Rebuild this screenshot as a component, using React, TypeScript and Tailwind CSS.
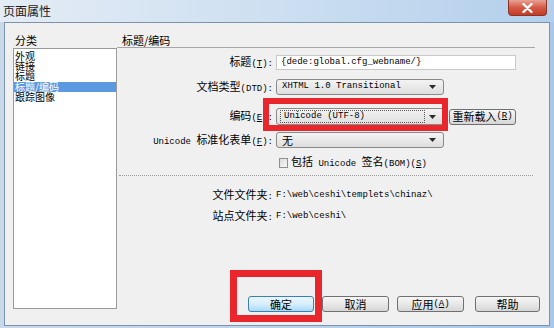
import React from 'react'

const mono = "font-['Liberation_Mono',monospace] text-[9px]"
const btn =
  "h-[16px] rounded-[3px] border border-[#707070] bg-gradient-to-b from-[#f6f6f6] via-[#e8e8e8] to-[#d6d6d6] flex items-center justify-center text-[11px] leading-none text-black"

const Arrow = () => (
  <svg width="7" height="4" viewBox="0 0 7 4" className="absolute right-[7px] top-1/2 -translate-y-1/2">
    <path d="M0 0 H7 L3.5 4 Z" fill="#2b2b2b" />
  </svg>
)

const Select = ({ children, w, h }: { children: React.ReactNode; w: string; h: string }) => (
  <div
    className={`${w} ${h} relative rounded-[3px] border border-[#8a8a8a] bg-gradient-to-b from-[#f4f4f4] to-[#dedede] flex items-center pl-[5px]`}
  >
    {children}
    <Arrow />
  </div>
)

const Row = ({ label, children, className }: { label: React.ReactNode; children: React.ReactNode; className: string }) => (
  <div className={`flex items-center ${className}`}>
    <div className="w-[156px] text-right text-[11px] leading-[12px] whitespace-nowrap">{label}</div>
    <div className="ml-[3px] flex items-center">{children}</div>
  </div>
)

export default function App() {
  return (
    <div className="relative w-[554px] h-[328px] overflow-hidden bg-gradient-to-r from-[#c9d9ea] via-[#bcd3ec] to-[#a9c8e8] font-['Noto_Sans_CJK_SC',sans-serif] text-black">
      {/* title bar */}
      <div className="h-[22px] flex items-center pl-[3px] bg-gradient-to-r from-[#e4ecf5] via-[#cddff1] to-[#b3cfec]">
        <span className="text-[12px] leading-none text-[#1a1a1a]">页面属性</span>
      </div>
      <div className="absolute top-0 right-[7px] w-[39px] h-[16px] rounded-b-[4px] border border-t-0 border-[#8d3324] bg-gradient-to-b from-[#e9a195] via-[#d45a45] to-[#c33c26] flex items-center justify-center">
        <svg width="11" height="10" viewBox="0 0 11 10">
          <path d="M1.5 1 L9.5 9 M9.5 1 L1.5 9" stroke="#fff" strokeWidth="2.4" strokeLinecap="round" />
        </svg>
      </div>

      {/* body */}
      <div className="mx-[4px] h-[304px] border border-[#7c93ad] bg-[#f0f0f0] flex">
        {/* left column */}
        <div className="w-[112px] pl-[8px] flex flex-col">
          <div className="pt-[11px] pl-[2px] text-[11px] leading-[12px]">分类</div>
          <div className="mt-[2px] w-[104px] h-[261px] border border-[#9a9a9a] bg-white pt-[2px] text-[10px] leading-[10px]">
            <div className="pl-[1px]">外观</div>
            <div className="pl-[1px]">链接</div>
            <div className="pl-[1px]">标题</div>
            <div className="pl-[1px] mt-[1px] bg-[#5b9ae0] text-white">标题/编码</div>
            <div className="pl-[1px]">跟踪图像</div>
          </div>
        </div>

        {/* right column */}
        <div className="flex-1 flex flex-col pr-[14px]">
          <div className="pt-[11px] pb-[1px] pl-[5px] border-b border-[#a7a7a7] text-[11px] leading-[12px]">标题/编码</div>

          <Row
            className="mt-[7px]"
            label={
              <>
                标题<span className={mono}>(<span className="underline">T</span>): </span>
              </>
            }
          >
            <div className={`w-[240px] h-[15px] border border-[#c9c9c9] bg-white flex items-center pl-[4px] ${mono}`}>
              {'{dede:global.cfg_webname/}'}
            </div>
          </Row>

          <Row
            className="mt-[9px]"
            label={
              <>
                文档类型<span className={mono}>(DTD): </span>
              </>
            }
          >
            <Select w="w-[168px]" h="h-[16px]">
              <span className={mono}>XHTML 1.0 Transitional</span>
            </Select>
          </Row>

          <Row
            className="mt-[13px]"
            label={
              <>
                编码<span className={mono}>(<span className="underline">E</span>): </span>
              </>
            }
          >
            <Select w="w-[168px]" h="h-[17px]">
              <span className={`-ml-[2px] w-[145px] h-[13px] border border-dotted border-[#555] flex items-center pl-[3px] ${mono}`}>
                Unicode (UTF-8)
              </span>
            </Select>
            <div className={`${btn} ml-[5px] w-[67px] rounded-[2px]`}>
              重新载入<span className={mono}>(<span className="underline">R</span>)</span>
            </div>
          </Row>

          <Row
            className="mt-[7px]"
            label={
              <>
                <span className={mono}>Unicode </span>标准化表单<span className={mono}>(<span className="underline">F</span>): </span>
              </>
            }
          >
            <Select w="w-[168px]" h="h-[16px]">
              <span className="text-[11px] leading-none">无</span>
            </Select>
          </Row>

          <Row className="mt-[7px]" label={null}>
            <div className="ml-[3px] w-[9px] h-[10px] border border-[#8f8f8f] bg-gradient-to-br from-[#dcdcdc] to-[#f8f8f8]" />
            <span className="ml-[3px] text-[11px] leading-[12px] whitespace-nowrap">
              包括<span className={mono}> Unicode </span>签名<span className={mono}>(BOM)(<span className="underline">S</span>)</span>
            </span>
          </Row>

          <div className="mt-[5px] ml-[2px] mr-[2px] border-t border-dotted border-[#9a9a9a]" />

          <Row className="mt-[12px]" label={<>文件文件夹<span className={mono}>: </span></>}>
            <span className={mono}>F:\web\ceshi\templets\chinaz\</span>
          </Row>
          <Row className="mt-[6px]" label={<>站点文件夹<span className={mono}>: </span></>}>
            <span className={mono}>F:\web\ceshi\</span>
          </Row>

          <div className="flex-1" />
          <div className="flex justify-end pb-[13px] mr-[-5px]">
            <div className="h-[16px] w-[66px] rounded-[3px] border border-[#3c7fb1] bg-gradient-to-b from-[#eaf6fd] via-[#d7effc] to-[#a7d9f5] flex items-center justify-center text-[11px] leading-none">
              确定
            </div>
            <div className={`${btn} ml-[8px] w-[67px]`}>取消</div>
            <div className={`${btn} ml-[8px] w-[67px]`}>
              应用<span className={mono}>(<span className="underline">A</span>)</span>
            </div>
            <div className={`${btn} ml-[11px] w-[65px]`}>帮助</div>
          </div>
        </div>
      </div>

      {/* red annotation boxes */}
      <div className="absolute left-[263px] top-[98px] w-[185px] h-[33px] border-[6px] border-[#e8262c]" />
      <div className="absolute left-[230px] top-[270px] w-[92px] h-[52px] border-[7px] border-[#e8262c]" />
    </div>
  )
}
